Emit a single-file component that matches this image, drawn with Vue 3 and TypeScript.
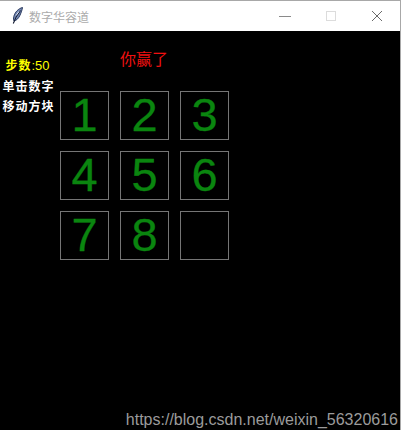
<script setup lang="ts">
const tiles: string[] = ['1', '2', '3', '4', '5', '6', '7', '8', '']
</script>

<template>
  <div class="window">
    <header class="titlebar">
      <svg class="feather" width="16" height="20" viewBox="0 0 16 20">
        <path d="M13.5 1.5C9.5 2.5 6 6 4.8 10.5c-.5 2-.3 3.6.2 4.5 2.2-.3 4.6-2.6 6-5.8 1.2-2.7 2.2-5.5 2.5-7.7z" fill="#7488b4" stroke="#2b3a5e" stroke-width="1" />
        <path d="M11.5 4.5C8.5 8 6.2 12 4.3 17.5" fill="none" stroke="#10182e" stroke-width="1.1" />
        <path d="M10 5.5 7 9.5" fill="none" stroke="#dbe2f0" stroke-width="1" />
      </svg>
      <span class="title">数字华容道</span>
      <div class="controls">
        <svg class="ctl" width="12" height="12" viewBox="0 0 12 12"><path d="M0 6.5h12" stroke="#8a8a8a" fill="none" /></svg>
        <svg class="ctl" width="12" height="12" viewBox="0 0 12 12"><rect x="1.5" y="1.5" width="9" height="9" stroke="#dcdcdc" fill="none" /></svg>
        <svg class="ctl" width="12" height="12" viewBox="0 0 12 12"><path d="M1 1l10 10M11 1 1 11" stroke="#6a6a6a" fill="none" /></svg>
      </div>
    </header>

    <main class="canvas">
      <aside class="side">
        <div class="steps"><span class="cjk">步数</span>:50</div>
        <div class="hint">单击数字</div>
        <div class="hint">移动方块</div>
      </aside>
      <section class="board">
        <div class="win">你赢了</div>
        <div class="grid">
          <div v-for="(t, i) in tiles" :key="i" class="tile">{{ t }}</div>
        </div>
      </section>
      <div class="watermark">https://blog.csdn.net/weixin_56320616</div>
    </main>
  </div>
</template>

<style scoped>
.window {
  width: 401px;
  height: 430px;
  display: flex;
  flex-direction: column;
  box-sizing: border-box;
  border-top: 1px solid #a8a8a8;
  border-right: 1px solid #a8a8a8;
  overflow: hidden;
  background: #000;
}
.titlebar {
  height: 30px;
  flex: none;
  background: #fff;
  display: flex;
  align-items: center;
  padding-left: 9px;
}
.feather {
  flex: none;
}
.title {
  margin-left: 4px;
  font: 12px "Noto Sans CJK SC", sans-serif;
  color: #ababab;
}
.controls {
  margin-left: auto;
  display: flex;
  gap: 34px;
  margin-right: 17px;
}
.canvas {
  position: relative;
  flex: 1;
  background: #000;
  display: flex;
}
.side {
  width: 60px;
  flex: none;
  padding-top: 25px;
  font-family: "Noto Sans CJK SC", sans-serif;
  font-size: 12px;
  line-height: 20px;
  text-align: center;
  box-sizing: border-box;
  padding-right: 3px;
}
.steps {
  color: #ffff00;
  font-family: "Liberation Sans", "Noto Sans CJK SC", sans-serif;
  font-size: 13px;
  padding-right: 2px;
}
.cjk {
  font-size: 12px;
  font-weight: 700;
  letter-spacing: 1px;
}
.hint {
  color: #fff;
  font-weight: 700;
  letter-spacing: 1px;
}
.board {
  display: flex;
  flex-direction: column;
}
.win {
  margin-top: 15px;
  margin-left: 60px;
  height: 24px;
  font: 16px/24px "Noto Sans CJK SC", sans-serif;
  color: #f01010;
  white-space: nowrap;
}
.grid {
  margin-top: 21px;
  display: grid;
  grid-template-columns: repeat(3, 49px);
  grid-auto-rows: 49px;
  gap: 11px;
}
.tile {
  box-sizing: border-box;
  border: 1px solid #757575;
  color: #0a850f;
  font: 47px/45px "Liberation Sans", sans-serif;
  -webkit-text-stroke: 0.3px #0a850f;
  text-align: center;
}
.watermark {
  position: absolute;
  right: 2px;
  bottom: 0;
  font: 16px/20px "Liberation Sans", sans-serif;
  color: #9b9b9b;
  white-space: nowrap;
}
</style>
